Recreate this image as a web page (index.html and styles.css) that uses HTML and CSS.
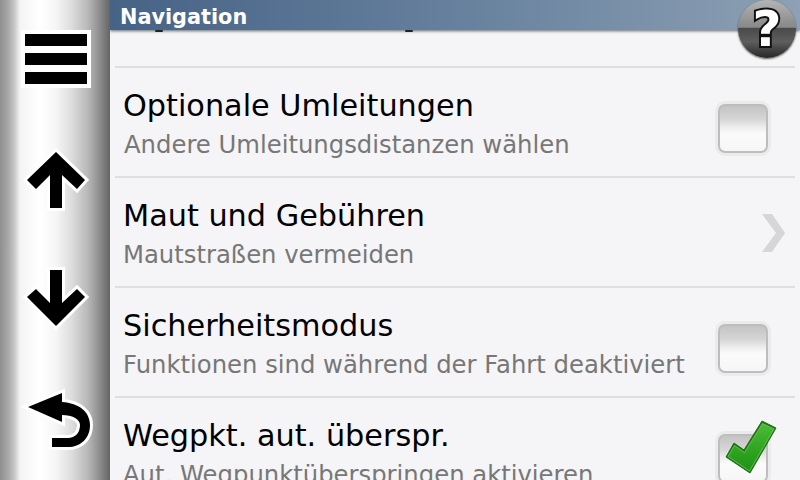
FILE: index.html
```html
<!DOCTYPE html>
<html lang="de">
<head>
    <meta charset="UTF-8">
    <title>Navigation</title>
    <link rel="stylesheet" href="styles.css">
</head>
<body>
    <div class="screen">
        <div class="sidebar">
            <svg class="side-icon" width="110" height="120" viewBox="0 0 110 120">
                <rect x="21" y="30" width="70" height="58" fill="#fff"/>
                <rect x="25" y="34" width="62" height="12" fill="#000"/>
                <rect x="25" y="53" width="62" height="12" fill="#000"/>
                <rect x="25" y="72" width="62" height="12" fill="#000"/>
            </svg>
            <svg class="side-icon" width="110" height="120" viewBox="0 120 110 120">
                <path class="glyph" d="M56 152 L85 180 L77 189 L62 175 L62 208 L50 208 L50 175 L36 189 L27 180 Z"/>
            </svg>
            <svg class="side-icon" width="110" height="120" viewBox="0 240 110 120">
                <path class="glyph" d="M56 326 L85 297 L77 289 L62 303 L62 270 L50 270 L50 303 L36 289 L27 297 Z"/>
            </svg>
            <svg class="side-icon" width="110" height="120" viewBox="0 360 110 120">
                <path class="glyph" d="M28 407 L62 393 L62 402 C79 403 90 412 90 425 C90 439 80 447 68 447 L52 447 L52 438 L68 438 C75 438 80 433 80 425 C80 419 72 415 62 415 L62 422 Z"/>
            </svg>
        </div>
        <div class="main">
            <div class="title-bar">Navigation</div>
            <div class="help-button"><span>?</span></div>
            <div class="list">
                <div class="row-peek">
                    <span class="peek-mark"></span>
                    <span class="peek-mark"></span>
                </div>
                <div class="row">
                    <div class="row-text row-text-shift">
                        <div class="row-title">Optionale Umleitungen</div>
                        <div class="row-sub">Andere Umleitungsdistanzen wählen</div>
                    </div>
                    <div class="checkbox"></div>
                </div>
                <div class="row">
                    <div class="row-text">
                        <div class="row-title">Maut und Gebühren</div>
                        <div class="row-sub">Mautstraßen vermeiden</div>
                    </div>
                    <svg class="chevron" width="24" height="38" viewBox="762 214 24 38">
                        <path d="M762 214 L772 214 L785 233 L772 252 L762 252 L776 233 Z" fill="#d6d6d6"/>
                    </svg>
                </div>
                <div class="row">
                    <div class="row-text">
                        <div class="row-title">Sicherheitsmodus</div>
                        <div class="row-sub">Funktionen sind während der Fahrt deaktiviert</div>
                    </div>
                    <div class="checkbox"></div>
                </div>
                <div class="row">
                    <div class="row-text">
                        <div class="row-title">Wegpkt. aut. überspr.</div>
                        <div class="row-sub">Aut. Wegpunktüberspringen aktivieren</div>
                    </div>
                    <div class="checkbox">
                        <svg class="tick" width="52" height="54" viewBox="726 420 52 54">
                            <defs>
                                <linearGradient id="tickFill" x1="0" y1="0" x2="0" y2="1">
                                    <stop offset="0" stop-color="#4cba38"/>
                                    <stop offset="0.55" stop-color="#2fa520"/>
                                    <stop offset="1" stop-color="#1f9216"/>
                                </linearGradient>
                            </defs>
                            <path d="M727 457 L735 443 L745 450 L763 421 L777 428 L751 473 Z" fill="#1b7412" stroke="#1b7412" stroke-linejoin="round"/>
                            <path d="M729 456.500 L735.500 445.500 L745.500 452.500 L763.500 423.500 L775 429 L750.500 471 Z" fill="url(#tickFill)" stroke="#7cc96b" stroke-width="0.8"/>
                        </svg>
                    </div>
                </div>
            </div>
        </div>
    </div>
</body>
</html>
```

FILE: styles.css
```css
* {
    box-sizing: border-box;
}
body {
    margin: 0;
    width: 800px;
    height: 480px;
    overflow: hidden;
    font-family: "DejaVu Sans", sans-serif;
}
.screen {
    display: flex;
    width: 800px;
    height: 480px;
    overflow: hidden;
    background: #f5f4f6;
}
.sidebar {
    display: grid;
    grid-template-rows: repeat(4, 120px);
    flex: 0 0 110px;
    height: 480px;
    background: linear-gradient(90deg, #8f8f8f 0, #a8a8a8 8px, #c4c4c4 14px, #f4f4f4 20px, #ffffff 40px, #f6f6f6 56px, #dcdcdc 72px, #b8b8b8 88px, #8c8c8c 100px, #646464 110px);
}
.side-icon {
    display: block;
}
.glyph {
    fill: #000;
    stroke: #fff;
    stroke-width: 6px;
    paint-order: stroke;
}
.main {
    position: relative;
    flex: 1;
    height: 480px;
    overflow: hidden;
}
.title-bar {
    height: 30px;
    padding: 5px 0 0 10px;
    color: #fff;
    font-size: 20.8px;
    font-weight: bold;
    line-height: 25px;
    background: linear-gradient(90deg, #466285 0, #66809d 50%, #8da0b4 100%);
    box-shadow: 0 1px 3px rgba(40, 40, 40, 0.7);
}
.help-button {
    position: absolute;
    z-index: 3;
    top: 0;
    right: 4px;
    display: flex;
    align-items: center;
    justify-content: center;
    width: 58px;
    height: 58px;
    border-radius: 50%;
    background: linear-gradient(180deg, #b4b4b4 0, #888 47%, #4a4a4a 49%, #5e5e5e 72%, #262626 100%);
    box-shadow: 0 1px 2px rgba(0, 0, 0, 0.6);
}
.help-button span {
    color: #fff;
    font-size: 50px;
    font-weight: bold;
    line-height: 58px;
    -webkit-text-stroke: 4px #111;
    paint-order: stroke fill;
}
.list {
    position: relative;
    z-index: 2;
    margin: 0 5px;
}
.row-peek {
    display: flex;
    gap: 242px;
    height: 38px;
    padding-left: 40px;
    border-bottom: 2px solid #e0dee0;
}
.peek-mark {
    width: 8px;
    height: 2px;
    border-radius: 1px;
    background: #222;
}
.row {
    display: flex;
    align-items: flex-start;
    justify-content: space-between;
    height: 110px;
    padding: 19px 27px 0 8px;
    border-bottom: 2px solid #e0dee0;
}
.row-text-shift .row-sub {
    margin-left: 1px;
}
.row-title {
    color: #000;
    font-size: 30.3px;
    line-height: 38px;
    white-space: nowrap;
}
.row-sub {
    margin-top: 6px;
    color: #777;
    font-size: 24.3px;
    line-height: 28px;
    white-space: nowrap;
}
.checkbox {
    position: relative;
    width: 50px;
    height: 49px;
    margin-top: 17px;
    border: 2px solid #bdbdbd;
    border-radius: 7px;
    background: linear-gradient(180deg, #c4c4c4 0, #d6d6d6 30%, #eeeeee 48%, #fbfbfb 62%, #f6f6f6 100%);
    box-shadow: 0 0 0 3px #ebebeb;
}
.chevron {
    margin: 17px -18px 0 0;
}
.tick {
    position: absolute;
    top: -16px;
    left: 5px;
}
```
